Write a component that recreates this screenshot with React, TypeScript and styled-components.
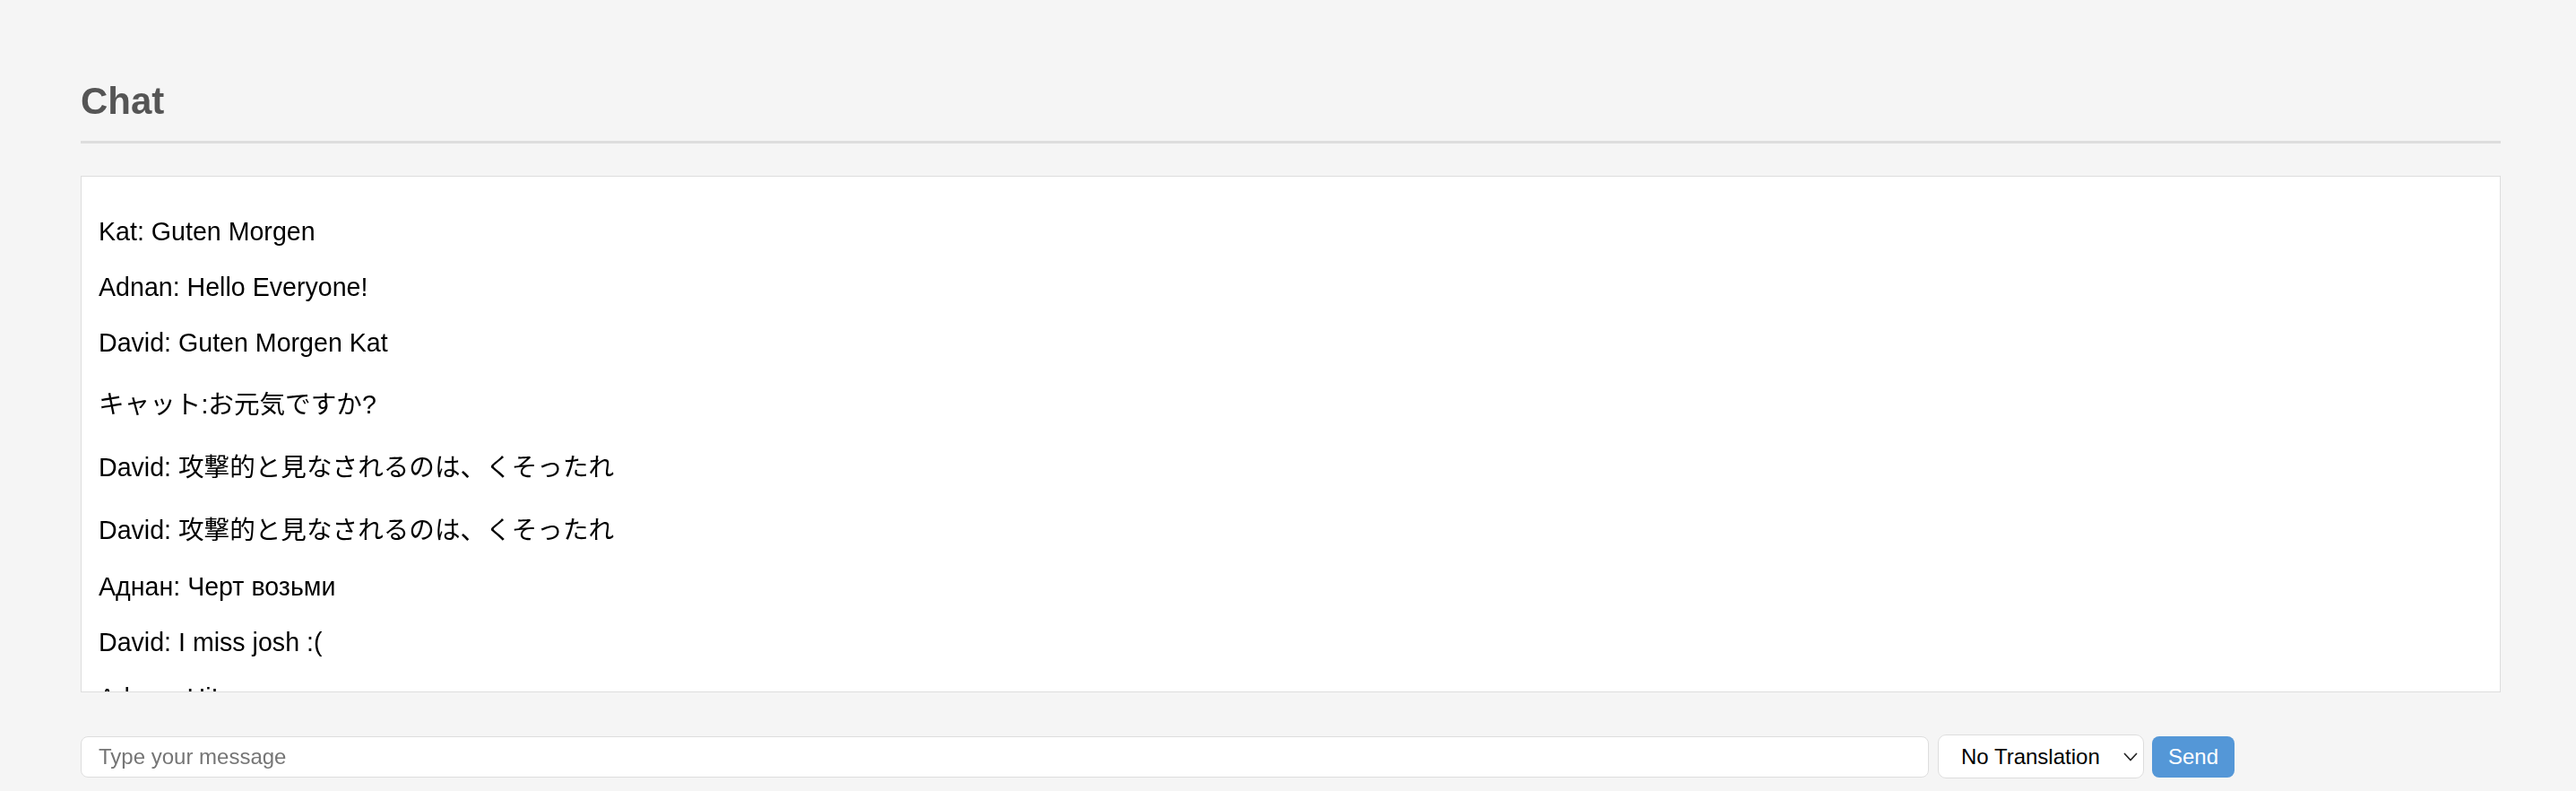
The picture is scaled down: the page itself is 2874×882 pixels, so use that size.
import styled, { createGlobalStyle } from "styled-components";

const GlobalStyle = createGlobalStyle`
    body {
        margin: 0;
        background-color: #f5f5f5;
        font-family: "Liberation Sans", "Noto Sans CJK JP", Arial, sans-serif;
    }
`;

const Page = styled.div`
    padding: 89px 84px 0 90px;
`;

const Title = styled.h2`
    margin: 0 0 36px;
    padding-bottom: 20px;
    font-size: 42px;
    font-weight: bold;
    color: #555;
    border-bottom: 3px solid #ddd;
`;

const MessageBox = styled.div`
    box-sizing: border-box;
    height: 576px;
    padding: 16px 19px;
    background-color: #fff;
    border: 1px solid #ddd;
    overflow-y: auto;
    scrollbar-width: none;

    &::-webkit-scrollbar {
        display: none;
    }
`;

const Message = styled.p`
    margin: 29px 0;
    font-size: 28.6px;
    color: #000;
`;

const InputRow = styled.div`
    display: flex;
    align-items: center;
    gap: 9px;
    margin-top: 47px;
`;

const MessageInput = styled.input`
    box-sizing: border-box;
    width: 2062px;
    height: 46px;
    padding: 0 19px;
    font-family: "Liberation Sans", Arial, sans-serif;
    font-size: 24px;
    color: #000;
    background-color: #fff;
    border: 1px solid #ddd;
    border-radius: 8px;
    outline: none;

    &::placeholder {
        color: #757575;
    }
`;

const SelectWrap = styled.div`
    position: relative;
    margin-left: 1px;
`;

const Select = styled.select`
    box-sizing: border-box;
    width: 230px;
    height: 49px;
    padding: 0 0 0 25px;
    font-family: "Liberation Sans", Arial, sans-serif;
    font-size: 24px;
    color: #000;
    background-color: #fff;
    border: 1px solid #ddd;
    border-radius: 9px;
    appearance: none;
    outline: none;
`;

const Chevron = styled.svg`
    position: absolute;
    right: 7px;
    top: 20px;
    pointer-events: none;
`;

const SendButton = styled.button`
    box-sizing: border-box;
    width: 92px;
    height: 46px;
    font-family: "Liberation Sans", Arial, sans-serif;
    font-size: 24px;
    color: #fff;
    background-color: #5497d7;
    border: none;
    border-radius: 8px;
`;

const messages = [
    "Kat: Guten Morgen",
    "Adnan: Hello Everyone!",
    "David: Guten Morgen Kat",
    "キャット:お元気ですか?",
    "David: 攻撃的と見なされるのは、くそったれ",
    "David: 攻撃的と見なされるのは、くそったれ",
    "Аднан: Черт возьми",
    "David: I miss josh :(",
    "Adnan: Hi!",
];

const App = () => {
    return (
        <>
            <GlobalStyle />
            <Page>
                <Title>Chat</Title>
                <MessageBox>
                    {messages.map((m, i) => (
                        <Message key={i}>{m}</Message>
                    ))}
                </MessageBox>
                <InputRow>
                    <MessageInput placeholder="Type your message" />
                    <SelectWrap>
                        <Select defaultValue="none">
                            <option value="none">No Translation</option>
                            <option value="en">English</option>
                            <option value="ja">Japanese</option>
                            <option value="ru">Russian</option>
                        </Select>
                        <Chevron width="16" height="10" viewBox="0 0 16 10">
                            <path d="M1 1 L8 8.5 L15 1" fill="none" stroke="#222" strokeWidth="1.6" />
                        </Chevron>
                    </SelectWrap>
                    <SendButton>Send</SendButton>
                </InputRow>
            </Page>
        </>
    );
};

export default App;
